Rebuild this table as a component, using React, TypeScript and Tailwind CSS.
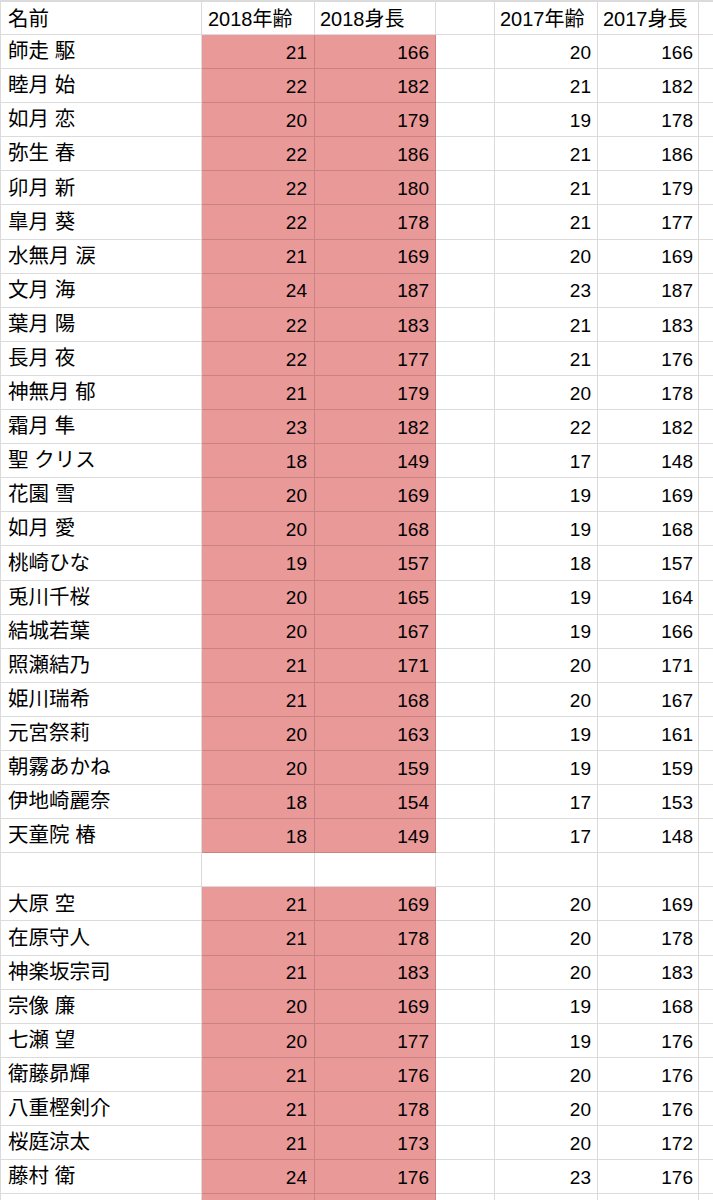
import React from "react";

type Row = [string, number, number, number, number] | null;

const rows: Row[] = [
  ["師走 駆", 21, 166, 20, 166],
  ["睦月 始", 22, 182, 21, 182],
  ["如月 恋", 20, 179, 19, 178],
  ["弥生 春", 22, 186, 21, 186],
  ["卯月 新", 22, 180, 21, 179],
  ["皐月 葵", 22, 178, 21, 177],
  ["水無月 涙", 21, 169, 20, 169],
  ["文月 海", 24, 187, 23, 187],
  ["葉月 陽", 22, 183, 21, 183],
  ["長月 夜", 22, 177, 21, 176],
  ["神無月 郁", 21, 179, 20, 178],
  ["霜月 隼", 23, 182, 22, 182],
  ["聖 クリス", 18, 149, 17, 148],
  ["花園 雪", 20, 169, 19, 169],
  ["如月 愛", 20, 168, 19, 168],
  ["桃崎ひな", 19, 157, 18, 157],
  ["兎川千桜", 20, 165, 19, 164],
  ["結城若葉", 20, 167, 19, 166],
  ["照瀬結乃", 21, 171, 20, 171],
  ["姫川瑞希", 21, 168, 20, 167],
  ["元宮祭莉", 20, 163, 19, 161],
  ["朝霧あかね", 20, 159, 19, 159],
  ["伊地崎麗奈", 18, 154, 17, 153],
  ["天童院 椿", 18, 149, 17, 148],
  null,
  ["大原 空", 21, 169, 20, 169],
  ["在原守人", 21, 178, 20, 178],
  ["神楽坂宗司", 21, 183, 20, 183],
  ["宗像 廉", 20, 169, 19, 168],
  ["七瀬 望", 20, 177, 19, 176],
  ["衛藤昴輝", 21, 176, 20, 176],
  ["八重樫剣介", 21, 178, 20, 176],
  ["桜庭涼太", 21, 173, 20, 172],
  ["藤村 衛", 24, 176, 23, 176],
];

const font = { fontFamily: '"Liberation Sans", "Noto Sans CJK JP", sans-serif' };

const cell = "h-full shrink-0 border-r border-b border-[rgba(0,0,0,0.14)] flex items-center";

function DataRow({ r, pinkEmpty }: { r: Row; pinkEmpty?: boolean }) {
  const pink = r !== null || pinkEmpty;
  const pinkCls = pink ? "bg-[#ea9999]" : "bg-white";
  return (
    <div className="flex h-[34.1px] text-black">
      <div className={`${cell} w-[201px] pl-[7px] text-[20.5px]`}>{r ? r[0] : ""}</div>
      <div className={`${cell} w-[113px] justify-end pr-[7px] pt-[3px] text-[19px] ${pinkCls}`}>{r ? r[1] : ""}</div>
      <div className={`${cell} w-[121px] justify-end pr-[6px] pt-[3px] text-[19px] ${pinkCls}`}>{r ? r[2] : ""}</div>
      <div className={`${cell} w-[59px]`}></div>
      <div className={`${cell} w-[103px] justify-end pr-[6px] pt-[3px] text-[19px]`}>{r ? r[3] : ""}</div>
      <div className={`${cell} w-[101px] justify-end pr-[5px] pt-[3px] text-[19px]`}>{r ? r[4] : ""}</div>
      <div className={`${cell} w-[16px]`}></div>
    </div>
  );
}

export default function App() {
  return (
    <div className="w-[713px] h-[1200px] overflow-hidden bg-white border-l border-t-2 border-[rgba(0,0,0,0.14)]" style={font}>
      <div className="flex h-[33px] text-black">
        <div className={`${cell} w-[201px] pl-[7px] pt-[2px] text-[20.5px]`}>名前</div>
        <div className={`${cell} w-[113px] pl-[6px] pt-[2px] text-[20px]`}>2018年齢</div>
        <div className={`${cell} w-[121px] pl-[5px] pt-[2px] text-[20px]`}>2018身長</div>
        <div className={`${cell} w-[59px]`}></div>
        <div className={`${cell} w-[103px] pl-[5px] pt-[2px] text-[20px]`}>2017年齢</div>
        <div className={`${cell} w-[101px] pl-[5px] pt-[2px] text-[20px]`}>2017身長</div>
        <div className={`${cell} w-[16px]`}></div>
      </div>
      {rows.map((r, i) => (
        <DataRow key={i} r={r} />
      ))}
      <DataRow r={null} pinkEmpty />
    </div>
  );
}
